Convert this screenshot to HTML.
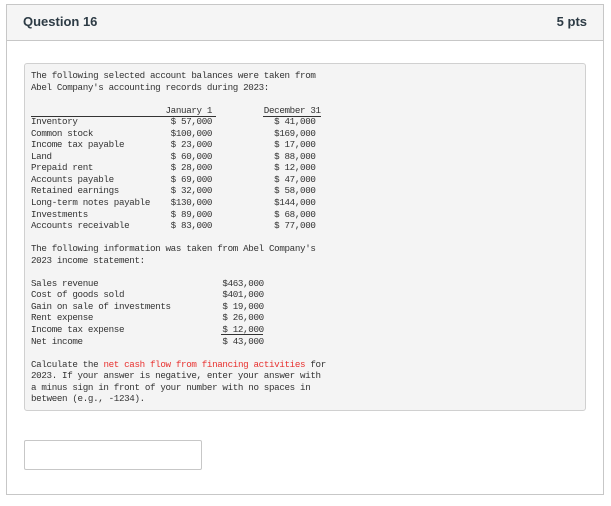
<!DOCTYPE html>
<html><head><meta charset="utf-8"><style>
body{margin:0;background:#fff;width:611px;height:506px;position:relative;overflow:hidden;font-family:"Liberation Sans",sans-serif}
.outer{position:absolute;left:6px;top:4px;width:596px;height:489px;border:1px solid #c7c7c7;}
.hdr{position:absolute;left:0;top:0;right:0;height:35px;background:#f5f5f5;border-bottom:1px solid #c7c7c7}
.t{position:absolute;left:16px;top:9px;font-size:13px;font-weight:bold;color:#2d3b45}
.p{position:absolute;right:16px;top:9px;font-size:13px;font-weight:bold;color:#2d3b45}
.box{position:absolute;left:24px;top:63px;width:560px;height:346px;background:#f4f4f4;border:1px solid #d0d0d0;border-radius:3px}
pre{position:absolute;left:31px;top:70px;margin:0;font-family:"Liberation Mono",monospace;font-size:9.2px;letter-spacing:-0.34px;line-height:11.55px;color:#333}
.r{color:#e8312f}
.ul{position:absolute;height:1px;background:#333}
.in{position:absolute;left:24px;top:440px;width:176px;height:28px;border:1px solid #c7c7c7;border-radius:2px;background:#fff}
</style></head><body>
<div class="outer"><div class="hdr"><div class="t">Question 16</div><div class="p">5 pts</div></div></div>
<div class="box"></div>
<pre>The following selected account balances were taken from
Abel Company's accounting records during 2023:

                          January 1          December 31
Inventory                  $ 57,000            $ 41,000
Common stock               $100,000            $169,000
Income tax payable         $ 23,000            $ 17,000
Land                       $ 60,000            $ 88,000
Prepaid rent               $ 28,000            $ 12,000
Accounts payable           $ 69,000            $ 47,000
Retained earnings          $ 32,000            $ 58,000
Long-term notes payable    $130,000            $144,000
Investments                $ 89,000            $ 68,000
Accounts receivable        $ 83,000            $ 77,000

The following information was taken from Abel Company's
2023 income statement:

Sales revenue                        $463,000
Cost of goods sold                   $401,000
Gain on sale of investments          $ 19,000
Rent expense                         $ 26,000
Income tax expense                   $ 12,000
Net income                           $ 43,000

Calculate the <span class="r">net cash flow from financing activities</span> for
2023. If your answer is negative, enter your answer with
a minus sign in front of your number with no spaces in
between (e.g., -1234).</pre>
<div class="ul" style="left:31px;top:116px;width:185px"></div>
<div class="ul" style="left:263px;top:116px;width:58px"></div>
<div class="ul" style="left:221px;top:334px;width:42px"></div>
<div class="in"></div>
</body></html>
